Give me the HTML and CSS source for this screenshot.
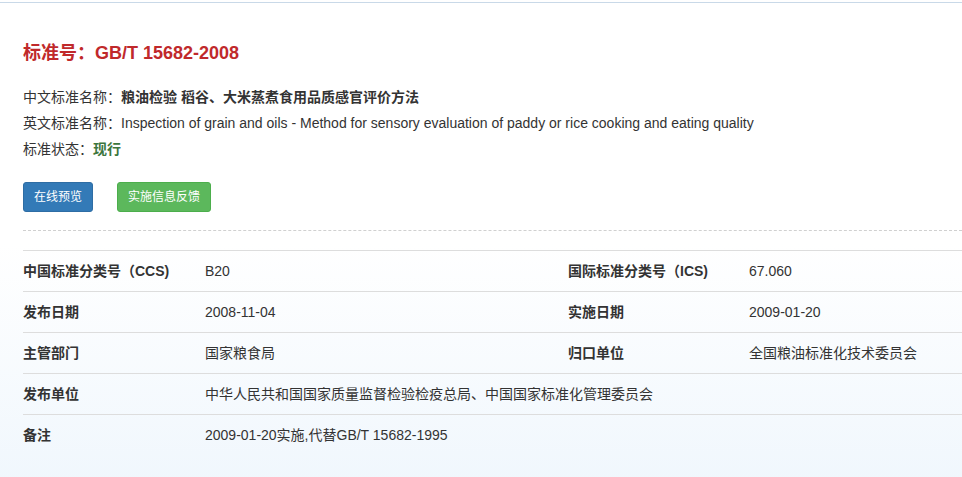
FILE: index.html
```html
<!DOCTYPE html>
<html lang="zh-CN">
<head>
<meta charset="utf-8">
<title>GB/T 15682-2008</title>
<link rel="stylesheet" href="styles.css">
</head>
<body>
<div class="page">
  <div class="detail">
    <h1 class="title">标准号：GB/T 15682-2008</h1>
    <div class="info">
      <p class="line"><span class="label">中文标准名称：</span><b class="strong">粮油检验 稻谷、大米蒸煮食用品质感官评价方法</b></p>
      <p class="line"><span class="label">英文标准名称：</span><span class="value">Inspection of grain and oils - Method for sensory evaluation of paddy or rice cooking and eating quality</span></p>
      <p class="line"><span class="label">标准状态：</span><b class="status">现行</b></p>
    </div>
    <div class="actions">
      <button class="btn btn-primary" type="button">在线预览</button>
      <button class="btn btn-success" type="button">实施信息反馈</button>
    </div>
    <hr class="dashed">
    <table class="meta">
      <colgroup>
        <col class="c1"><col class="c2"><col class="c3"><col class="c4">
      </colgroup>
      <tbody>
        <tr>
          <th>中国标准分类号（CCS)</th><td>B20</td>
          <th>国际标准分类号（ICS)</th><td>67.060</td>
        </tr>
        <tr>
          <th>发布日期</th><td>2008-11-04</td>
          <th>实施日期</th><td>2009-01-20</td>
        </tr>
        <tr>
          <th>主管部门</th><td>国家粮食局</td>
          <th>归口单位</th><td>全国粮油标准化技术委员会</td>
        </tr>
        <tr>
          <th>发布单位</th><td colspan="3">中华人民共和国国家质量监督检验检疫总局、中国国家标准化管理委员会</td>
        </tr>
        <tr class="last">
          <th>备注</th><td colspan="3">2009-01-20实施,代替GB/T 15682-1995</td>
        </tr>
      </tbody>
    </table>
  </div>
</div>
</body>
</html>
```

FILE: styles.css
```css
html, body {
  margin: 0;
  padding: 0;
}

body {
  font-family: "Liberation Sans", Arial, "Noto Sans CJK SC", sans-serif;
  font-size: 14px;
  color: #333;
  background: #fff;
  overflow: hidden;
}

.page {
  margin-top: 2px;
  border-top: 1px solid #c9d9e8;
  min-height: 474px;
  background: linear-gradient(to bottom, #ffffff 0%, #ffffff 50%, #f0f7fd 100%);
}

.detail {
  padding: 37px 0 30px 23px;
}

.title {
  margin: 0;
  font-size: 18px;
  line-height: 26px;
  font-weight: bold;
  color: #c0292b;
}

.info {
  margin-top: 18px;
}

.line {
  margin: 0;
  line-height: 26px;
}

.strong {
  font-weight: bold;
}

.status {
  font-weight: bold;
  color: #3c763d;
}

.actions {
  margin-top: 20px;
  display: flex;
  gap: 24px;
}

.btn {
  font-family: inherit;
  font-size: 12px;
  line-height: 18px;
  padding: 5px 10px;
  border-radius: 3px;
  border: 1px solid transparent;
  color: #fff;
  cursor: pointer;
}

.btn-primary {
  background: #337ab7;
  border-color: #2e6da4;
}

.btn-success {
  background: #5cb85c;
  border-color: #4cae4c;
}

.dashed {
  margin: 18px 0 0 0;
  border: 0;
  border-top: 1px dashed #d0d0d0;
  height: 0;
}

.meta {
  margin-top: 19px;
  width: 100%;
  border-collapse: collapse;
  table-layout: fixed;
}

.c1 { width: 182px; }
.c2 { width: 363px; }
.c3 { width: 181px; }

.meta th,
.meta td {
  text-align: left;
  padding: 10px 0;
  line-height: 20px;
  border-top: 1px solid #dddddd;
  vertical-align: top;
  white-space: nowrap;
}

.meta th {
  font-weight: bold;
}

.meta td {
  font-weight: normal;
}
```
